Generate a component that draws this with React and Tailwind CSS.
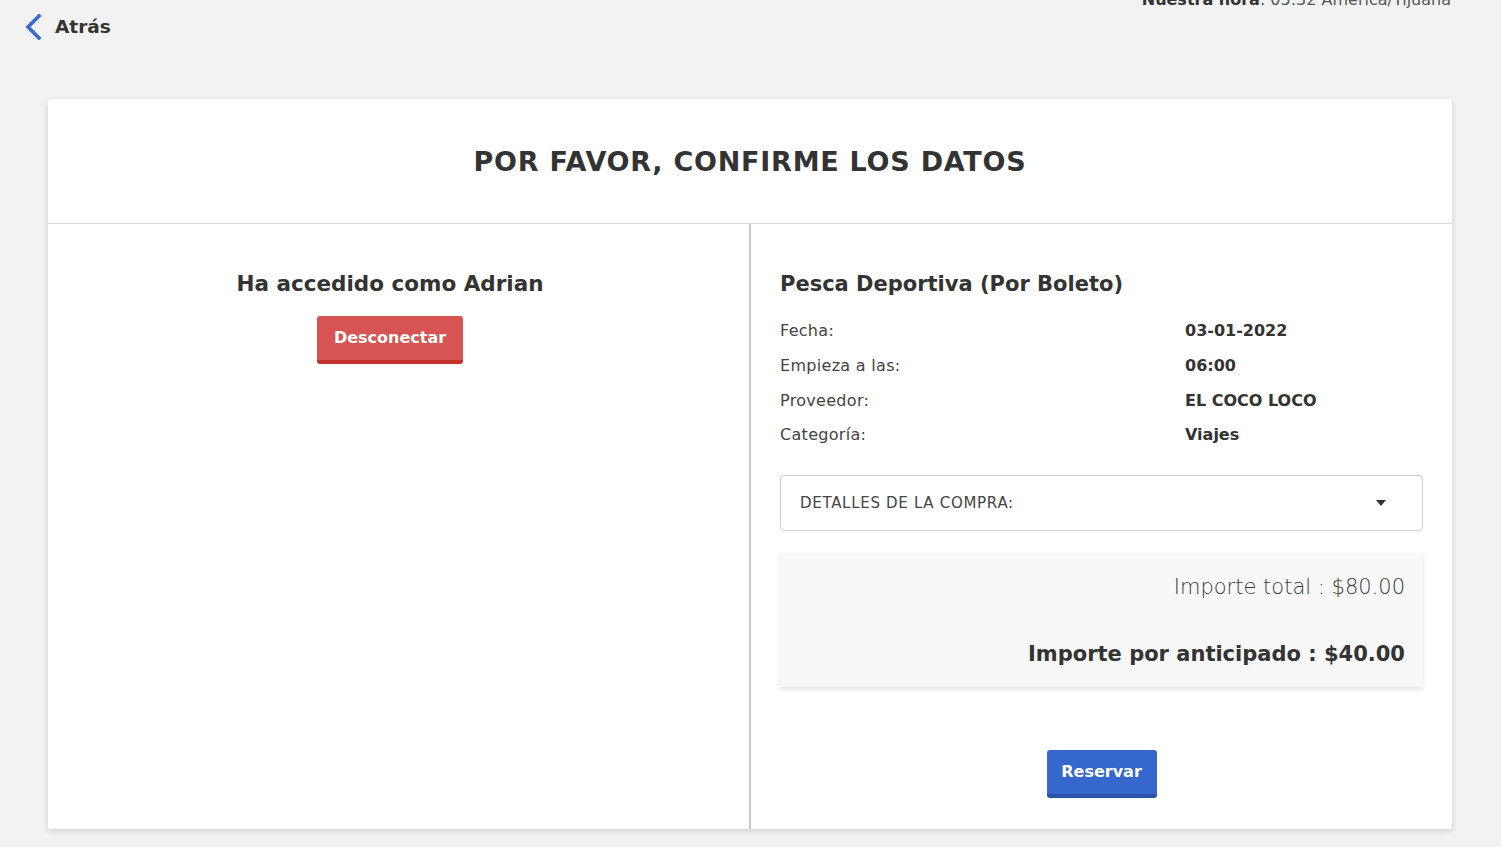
const FONT = "font-['DejaVu_Sans',sans-serif]"

const DETALLES = [
  { label: 'Fecha:', value: '03-01-2022' },
  { label: 'Empieza a las:', value: '06:00' },
  { label: 'Proveedor:', value: 'EL COCO LOCO' },
  { label: 'Categoría:', value: 'Viajes' },
]

function BackChevron() {
  return (
    <svg width="18" height="26" viewBox="0 0 18 26" fill="none">
      <path d="M15 2 L4 13 L15 24" stroke="#3a6bd4" strokeWidth="3.6" strokeLinecap="square" strokeLinejoin="miter" />
    </svg>
  )
}

export default function App() {
  return (
    <div className={`${FONT} min-h-[847px] bg-[#f2f2f2] text-[#333] overflow-hidden`}>
      {/* Top bar */}
      <div className="flex items-start justify-between h-[99px]">
        <button className="flex items-center gap-[13px] ml-[24px] mt-[13px] h-[28px]">
          <BackChevron />
          <span className="text-[18.5px] font-bold">Atrás</span>
        </button>
        <div className="mr-[50px] -mt-[12px] text-[16px] text-[#555]">
          <span className="font-bold text-[#333]">Nuestra hora</span>: 05:32 America/Tijuana
        </div>
      </div>

      {/* Card */}
      <div className="ml-[48px] mr-[49px] bg-white rounded-[3px] shadow-[0_2px_6px_rgba(0,0,0,0.15)]">
        <div className="h-[125px] flex items-center justify-center border-b border-[#d9d9d9]">
          <h1 className="text-[27px] font-extrabold tracking-[0.75px] pt-[2px]">POR FAVOR, CONFIRME LOS DATOS</h1>
        </div>

        <div className="grid grid-cols-[703px_1fr]">
          {/* Left column */}
          <div className="flex flex-col items-center pt-[45px] pr-[17px] border-r-2 border-[#c8c8c8]">
            <h2 className="text-[21.5px] font-semibold leading-[30px]">Ha accedido como Adrian</h2>
            <button className="mt-[17px] w-[146px] h-[48px] rounded-[3px] bg-[#d75452] border-b-4 border-[#c4302e] text-white font-bold text-[16px]">
              Desconectar
            </button>
          </div>

          {/* Right column */}
          <div className="pl-[29px] pr-[29px] pt-[45px] pb-[31px]">
            <h2 className="text-[21px] font-semibold leading-[30px]">Pesca Deportiva (Por Boleto)</h2>
            <div className="mt-[15px] flex flex-col">
              {DETALLES.map((d) => (
                <div key={d.label} className="grid grid-cols-[405px_1fr] h-[34.7px] items-center">
                  <span className="text-[16px] tracking-[0.3px] text-[#444]">{d.label}</span>
                  <span className="text-[16px] font-bold">{d.value}</span>
                </div>
              ))}
            </div>

            <div className="mt-[22px] h-[56px] border border-[#cfcfcf] rounded-[4px] flex items-center justify-between pl-[19px] pr-[36px]">
              <span className="text-[15px] tracking-[0.7px] text-[#444]">DETALLES DE LA COMPRA:</span>
              <svg width="10" height="6" viewBox="0 0 10 6" className="text-[#333]">
                <path d="M0 0 L10 0 L5 6 Z" fill="currentColor" />
              </svg>
            </div>

            <div className="mt-[22px] h-[134px] bg-[#f8f8f8] shadow-[0_2px_4px_rgba(0,0,0,0.12)] flex flex-col items-end pr-[18px] pt-[18px]">
              <span className="text-[21px] font-light text-[#3a3a3a] leading-[32px]">Importe total : $80.00</span>
              <span className="mt-[35px] text-[21px] font-extrabold leading-[32px]">Importe por anticipado : $40.00</span>
            </div>

            <div className="flex justify-center mt-[63px]">
              <button className="w-[110px] h-[48px] rounded-[3px] bg-[#3567cc] border-b-4 border-[#2a52a6] text-white font-bold text-[16px]">
                Reservar
              </button>
            </div>
          </div>
        </div>
      </div>
    </div>
  )
}
